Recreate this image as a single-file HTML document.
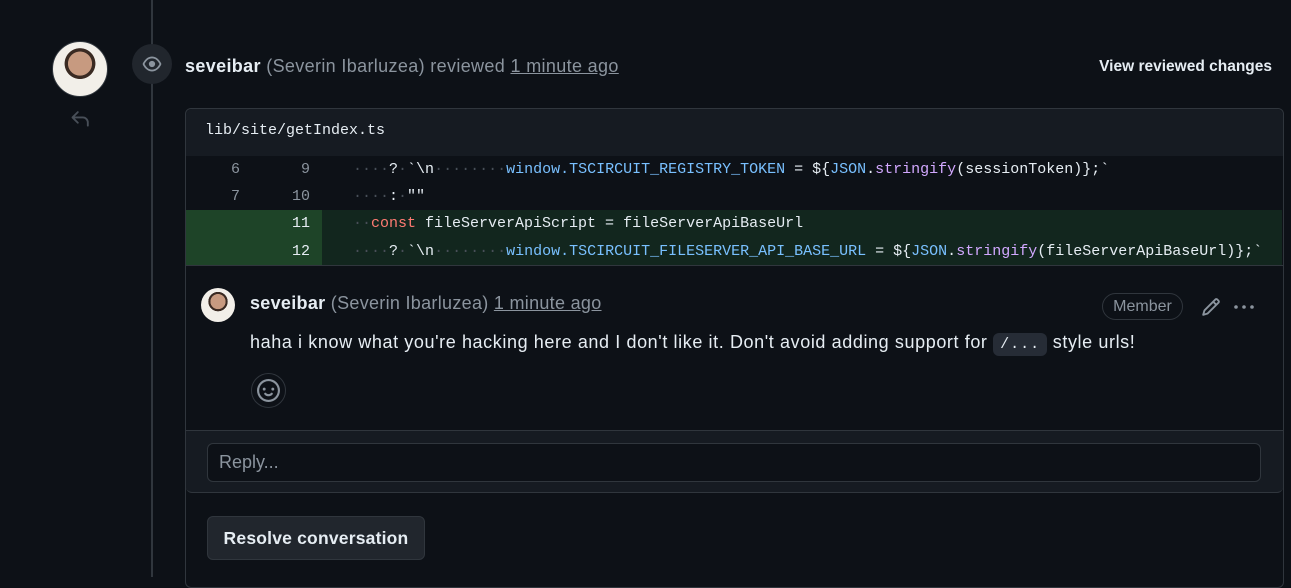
<!DOCTYPE html>
<html><head><style>
*{box-sizing:border-box;margin:0;padding:0}
body{width:1291px;height:577px;background:#0d1117;font-family:"Liberation Sans",sans-serif;color:#e6edf3;position:relative;overflow:hidden}
.abs{position:absolute}
.mono{font-family:"Liberation Mono",monospace;font-size:15px;letter-spacing:0}
.row{position:absolute;left:186px;width:1096px;height:28px;line-height:28px}
.n{position:absolute;width:30px;text-align:right;color:#8b949e}
.d{color:#484f58}
.c{position:absolute;left:167px;white-space:pre}
.b{color:#79c0ff}.p{color:#d2a8ff}.r{color:#ff7b72}.s{color:#a5d6ff}
</style></head><body>
<div class="abs" style="left:151px;top:0;width:2px;height:577px;background:#30363d"></div>
<div class="abs" style="left:52px;top:41px;width:56px;height:56px;border-radius:50%;background:radial-gradient(circle at 50% 40%,#c79a80 0 28%,#3a2a22 29% 36%,#f2efe9 37%);border:1px solid #30363d"></div>
<svg class="abs" style="left:70px;top:109px" width="20" height="20" viewBox="0 0 16 16"><path d="M6.78 1.97a.75.75 0 0 1 0 1.06L3.81 6h6.44A4.75 4.75 0 0 1 15 10.75v2.5a.75.75 0 0 1-1.5 0v-2.5a3.25 3.25 0 0 0-3.250-3.25H3.81l2.97 2.97a.75.75 0 1 1-1.06 1.06L1.47 7.28a.75.75 0 0 1 0-1.060l4.25-4.25a.75.75 0 0 1 1.06 0Z" fill="#484f58"/></svg>
<div class="abs" style="left:132px;top:44px;width:40px;height:40px;border-radius:50%;background:#21262d"></div>
<svg class="abs" style="left:142px;top:54px" width="20" height="20" viewBox="0 0 16 16"><path d="M8 2c1.98 0 3.61.9 4.86 2.06C14.09 5.2 14.9 6.58 15.35 7.5c.12.3.12.68 0 .99-.45.92-1.26 2.3-2.49 3.45C11.61 13.1 9.98 14 8 14s-3.61-.9-4.86-2.06C1.91 10.8 1.1 9.42.65 8.5a1.2 1.2 0 0 1 0-.99C1.1 6.58 1.91 5.2 3.14 4.06 4.39 2.9 6.02 2 8 2ZM2 8c.4.8 1.1 2 2.17 3 1.06 1 2.350 1.5 3.83 1.5s2.77-.5 3.83-1.5C12.9 10 13.6 8.8 14 8c-.4-.8-1.1-2-2.17-3C10.77 4 9.48 3.5 8 3.5S5.23 4 4.17 5C3.1 6 2.4 7.2 2 8Zm6-2.5a2.5 2.5 0 1 1 0 5 2.5 2.5 0 0 1 0-5Z" fill="#8b949e"/></svg>
<div class="abs" style="left:185px;top:56px;font-size:18px;letter-spacing:0.35px;white-space:nowrap"><b>seveibar</b> <span style="color:#8b949e">(Severin Ibarluzea) reviewed <span style="text-decoration:underline">1 minute ago</span></span></div>
<div class="abs" style="left:1040px;top:58px;width:232px;text-align:right;font-size:15.5px;font-weight:bold">View reviewed changes</div>

<div class="abs" style="left:185px;top:108px;width:1099px;height:480px;border:1px solid #30363d;border-radius:6px"></div>
<div class="abs" style="left:186px;top:109px;width:1097px;height:47px;background:#161b22;border-radius:6px 6px 0 0"></div>
<div class="abs mono" style="left:205px;top:122px;font-size:15px">lib/site/getIndex.ts</div>
<div class="mono">
<div class="row" style="top:156px"><span class="n" style="left:24px">6</span><span class="n" style="left:94px">9</span><span class="c"><span class="d">····</span>?<span class="d">·</span>`\n<span class="d">········</span><span class="b">window.TSCIRCUIT_REGISTRY_TOKEN</span> = ${<span class="b">JSON</span>.<span class="p">stringify</span>(sessionToken)};`</span></div>
<div class="row" style="top:183px"><span class="n" style="left:24px">7</span><span class="n" style="left:94px">10</span><span class="c"><span class="d">····</span>:<span class="d">·</span>""</span></div>
<div class="row" style="top:210px;background:#12261e"><div class="abs" style="left:0;top:0;width:136px;height:28px;background:#1e4428"></div><span class="n" style="left:94px;color:#e6edf3">11</span><span class="c"><span class="d">··</span><span class="r">const</span> fileServerApiScript = fileServerApiBaseUrl</span></div>
<div class="row" style="top:238px;background:#12261e"><div class="abs" style="left:0;top:0;width:136px;height:27px;background:#1e4428"></div><span class="n" style="left:94px;color:#e6edf3">12</span><span class="c"><span class="d">····</span>?<span class="d">·</span>`\n<span class="d">········</span><span class="b">window.TSCIRCUIT_FILESERVER_API_BASE_URL</span> = ${<span class="b">JSON</span>.<span class="p">stringify</span>(fileServerApiBaseUrl)};`</span></div>
</div>
<div class="abs" style="left:186px;top:265px;width:1097px;height:1px;background:#30363d"></div>
<div class="abs" style="left:201px;top:288px;width:34px;height:34px;border-radius:50%;background:radial-gradient(circle at 50% 40%,#c79a80 0 28%,#3a2a22 29% 36%,#f2efe9 37%)"></div>
<div class="abs" style="left:250px;top:293px;font-size:18px;letter-spacing:0.3px;white-space:nowrap"><b>seveibar</b> <span style="color:#8b949e">(Severin Ibarluzea) <span style="text-decoration:underline">1 minute ago</span></span></div>
<div class="abs" style="left:1102px;top:293px;width:81px;height:27px;border:1px solid #30363d;border-radius:14px;color:#8b949e;font-size:16px;text-align:center;line-height:25px">Member</div>
<svg class="abs" style="left:1201px;top:297px" width="20" height="20" viewBox="0 0 16 16"><path d="M11.013 1.427a1.75 1.75 0 0 1 2.474 0l1.086 1.086a1.75 1.75 0 0 1 0 2.474l-8.61 8.61c-.21.21-.47.364-.756.445l-3.251.93a.75.75 0 0 1-.927-.928l.929-3.25c.081-.286.235-.547.445-.758l8.61-8.61Zm.176 4.823L9.75 4.81l-6.286 6.287a.253.253 0 0 0-.064.108l-.558 1.953 1.953-.558a.253.253 0 0 0 .108-.064Zm1.238-3.763a.25.25 0 0 0-.354 0L10.811 3.75l1.439 1.44 1.263-1.263a.25.25 0 0 0 0-.354Z" fill="#8b949e"/></svg>
<svg class="abs" style="left:1233px;top:297px" width="22" height="20" viewBox="0 0 22 20"><circle cx="3" cy="10" r="1.8" fill="#8b949e"/><circle cx="11" cy="10" r="1.8" fill="#8b949e"/><circle cx="19" cy="10" r="1.8" fill="#8b949e"/></svg>
<div class="abs" style="left:250px;top:332px;font-size:18px;letter-spacing:0.6px;white-space:nowrap">haha i know what you're hacking here and I don't like it. Don't avoid adding support for <span class="mono" style="background:#262c36;border-radius:6px;padding:3px 7px;font-size:15px;letter-spacing:1px">/...</span> style urls!</div>
<div class="abs" style="left:251px;top:373px;width:35px;height:35px;border-radius:50%;border:1px solid #30363d;background:#0d1117"></div>
<svg class="abs" style="left:257px;top:379px" width="23" height="23" viewBox="0 0 16 16"><path d="M8 0a8 8 0 1 1 0 16A8 8 0 0 1 8 0ZM1.5 8a6.5 6.5 0 1 0 13 0 6.5 6.5 0 0 0-13 0Zm3.82 1.636a.75.75 0 0 1 1.038.175l.007.009c.103.118.22.222.35.31.264.178.683.37 1.285.37.602 0 1.02-.192 1.285-.371.13-.088.247-.192.35-.31l.007-.008a.75.75 0 0 1 1.222.87l-.022-.015c.02.013.021.015.021.015v.001l-.001.002-.002.003-.005.007-.014.019a2.066 2.066 0 0 1-.184.213c-.16.166-.338.316-.53.445-.63.418-1.37.638-2.127.629-.946 0-1.652-.308-2.126-.63a3.331 3.331 0 0 1-.715-.657l-.014-.02-.005-.006-.002-.003v-.002h-.001l.613-.432-.614.43a.75.75 0 0 1 .183-1.044ZM12 7a1 1 0 1 1-2 0 1 1 0 0 1 2 0ZM5 8a1 1 0 1 1 0-2 1 1 0 0 1 0 2Z" fill="#8b949e"/></svg>
<div class="abs" style="left:186px;top:430px;width:1097px;height:63px;background:#161b22;border-top:1px solid #30363d;border-bottom:1px solid #30363d;border-radius:0 0 6px 6px"></div>
<div class="abs" style="left:207px;top:443px;width:1054px;height:39px;background:#0d1117;border:1px solid #30363d;border-radius:6px;color:#8b949e;font-size:18px;padding:8px 11px">Reply...</div>
<div class="abs" style="left:207px;top:516px;width:218px;height:44px;background:#21262d;border:1px solid #30363d;border-radius:6px;font-size:17.5px;letter-spacing:0.2px;font-weight:bold;text-align:center;line-height:42px">Resolve conversation</div>
</body></html>
